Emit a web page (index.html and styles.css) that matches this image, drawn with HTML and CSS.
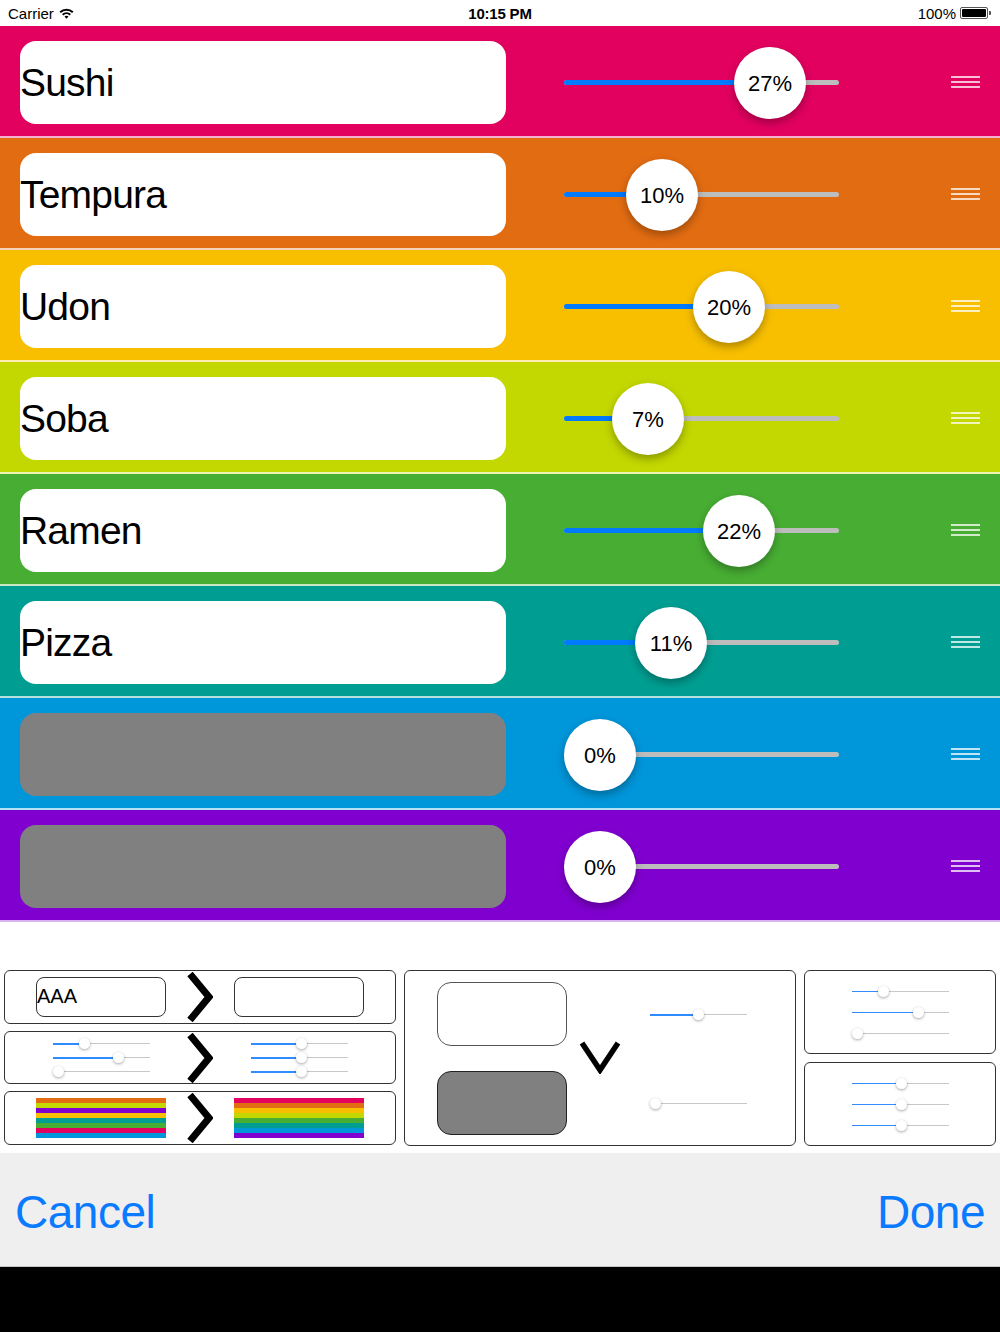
FILE: index.html
```html
<!DOCTYPE html>
<html lang="en">

<head>
    <meta charset="UTF-8">
    <meta name="viewport" content="width=device-width, initial-scale=1.0">
    <title>Pie Editor</title>
    <link rel="stylesheet" href="styles.css">
</head>

<body>
    <div class="statusbar">
        <div class="sb-left">
            Carrier
            <svg class="wifi" width="15" height="11" viewBox="0 0 15 11">
                <path d="M0.5 3.6 A10 10 0 0 1 14.5 3.6 L13.1 5 A8 8 0 0 0 1.9 5 Z" fill="#000"/>
                <path d="M3 6.1 A6.5 6.5 0 0 1 12 6.1 L10.6 7.5 A4.5 4.5 0 0 0 4.4 7.5 Z" fill="#000"/>
                <path d="M5.5 8.6 A3 3 0 0 1 9.5 8.6 L7.5 10.7 Z" fill="#000"/>
            </svg>
        </div>
        <div class="sb-time">10:15 PM</div>
        <div class="sb-right">
            100%
            <span class="battery"><span class="battery-level"></span></span>
        </div>
    </div>

    <!-- 項目リスト -->
    <div class="rows">
        <div class="row c-pink">
            <div class="field">Sushi</div>
            <div class="slider">
                <div class="track"><div class="fill" style="width: 206px"></div></div>
                <div class="thumb" style="left: 170px">27%</div>
            </div>
            <div class="handle"><span></span><span></span><span></span></div>
        </div>
        <div class="row c-orange">
            <div class="field">Tempura</div>
            <div class="slider">
                <div class="track"><div class="fill" style="width: 98px"></div></div>
                <div class="thumb" style="left: 62px">10%</div>
            </div>
            <div class="handle"><span></span><span></span><span></span></div>
        </div>
        <div class="row c-yellow">
            <div class="field">Udon</div>
            <div class="slider">
                <div class="track"><div class="fill" style="width: 165px"></div></div>
                <div class="thumb" style="left: 129px">20%</div>
            </div>
            <div class="handle"><span></span><span></span><span></span></div>
        </div>
        <div class="row c-lime">
            <div class="field">Soba</div>
            <div class="slider">
                <div class="track"><div class="fill" style="width: 84px"></div></div>
                <div class="thumb" style="left: 48px">7%</div>
            </div>
            <div class="handle"><span></span><span></span><span></span></div>
        </div>
        <div class="row c-green">
            <div class="field">Ramen</div>
            <div class="slider">
                <div class="track"><div class="fill" style="width: 175px"></div></div>
                <div class="thumb" style="left: 139px">22%</div>
            </div>
            <div class="handle"><span></span><span></span><span></span></div>
        </div>
        <div class="row c-teal">
            <div class="field">Pizza</div>
            <div class="slider">
                <div class="track"><div class="fill" style="width: 107px"></div></div>
                <div class="thumb" style="left: 71px">11%</div>
            </div>
            <div class="handle"><span></span><span></span><span></span></div>
        </div>
        <div class="row c-blue">
            <div class="field empty"></div>
            <div class="slider">
                <div class="track"></div>
                <div class="thumb" style="left: 0px">0%</div>
            </div>
            <div class="handle"><span></span><span></span><span></span></div>
        </div>
        <div class="row c-purple">
            <div class="field empty"></div>
            <div class="slider">
                <div class="track"></div>
                <div class="thumb" style="left: 0px">0%</div>
            </div>
            <div class="handle"><span></span><span></span><span></span></div>
        </div>
    </div>

    <!-- 操作パネル -->
    <div class="panels">
        <div class="col-left">
            <div class="box trio">
                <div class="mini-field">AAA</div>
                <svg class="chev" width="26" height="50" viewBox="0 0 26 50">
                    <polyline points="3,2 22,25 3,48" fill="none" stroke="#000" stroke-width="7"/>
                </svg>
                <div class="mini-field"></div>
            </div>
            <div class="box trio">
                <div class="mini-group">
                    <div class="mini-slider"><div class="mini-fill" style="width: 32px"></div><div class="mini-thumb" style="left: 26px"></div></div>
                    <div class="mini-slider"><div class="mini-fill" style="width: 66px"></div><div class="mini-thumb" style="left: 60px"></div></div>
                    <div class="mini-slider"><div class="mini-thumb" style="left: 0px"></div></div>
                </div>
                <svg class="chev" width="26" height="50" viewBox="0 0 26 50">
                    <polyline points="3,2 22,25 3,48" fill="none" stroke="#000" stroke-width="7"/>
                </svg>
                <div class="mini-group">
                    <div class="mini-slider"><div class="mini-fill" style="width: 50px"></div><div class="mini-thumb" style="left: 45px"></div></div>
                    <div class="mini-slider"><div class="mini-fill" style="width: 50px"></div><div class="mini-thumb" style="left: 45px"></div></div>
                    <div class="mini-slider"><div class="mini-fill" style="width: 50px"></div><div class="mini-thumb" style="left: 45px"></div></div>
                </div>
            </div>
            <div class="box trio">
                <div class="stripes">
                    <span class="c-orange"></span><span class="c-lime"></span><span class="c-purple"></span><span class="c-yellow"></span>
                    <span class="c-teal"></span><span class="c-green"></span><span class="c-pink"></span><span class="c-blue"></span>
                </div>
                <svg class="chev" width="26" height="50" viewBox="0 0 26 50">
                    <polyline points="3,2 22,25 3,48" fill="none" stroke="#000" stroke-width="7"/>
                </svg>
                <div class="stripes">
                    <span class="c-pink"></span><span class="c-orange"></span><span class="c-yellow"></span><span class="c-lime"></span>
                    <span class="c-green"></span><span class="c-teal"></span><span class="c-blue"></span><span class="c-purple"></span>
                </div>
            </div>
        </div>

        <div class="box compare">
            <div class="cmp-field"></div>
            <svg class="vee" width="42" height="34" viewBox="0 0 42 34">
                <polyline points="3,3 21,30 39,3" fill="none" stroke="#000" stroke-width="5.5"/>
            </svg>
            <div class="cmp-slider">
                <div class="mini-slider"><div class="mini-fill thick" style="width: 48px"></div><div class="mini-thumb" style="left: 43px"></div></div>
            </div>
            <div class="cmp-field grey"></div>
            <div class="cmp-slider">
                <div class="mini-slider"><div class="mini-thumb" style="left: 0px"></div></div>
            </div>
        </div>

        <div class="col-right">
            <div class="box stack">
                <div class="mini-slider"><div class="mini-fill" style="width: 31px"></div><div class="mini-thumb" style="left: 26px"></div></div>
                <div class="mini-slider"><div class="mini-fill" style="width: 66px"></div><div class="mini-thumb" style="left: 61px"></div></div>
                <div class="mini-slider"><div class="mini-thumb" style="left: 0px"></div></div>
            </div>
            <div class="box stack">
                <div class="mini-slider"><div class="mini-fill" style="width: 49px"></div><div class="mini-thumb" style="left: 44px"></div></div>
                <div class="mini-slider"><div class="mini-fill" style="width: 49px"></div><div class="mini-thumb" style="left: 44px"></div></div>
                <div class="mini-slider"><div class="mini-fill" style="width: 49px"></div><div class="mini-thumb" style="left: 44px"></div></div>
            </div>
        </div>
    </div>

    <div class="toolbar">
        <span class="btn">Cancel</span>
        <span class="btn">Done</span>
    </div>
    <div class="blackout"></div>
</body>

</html>
```

FILE: styles.css
```css
body {
    margin: 0;
    width: 1000px;
    background-color: #fff;
    font-family: "Liberation Sans", Arial, sans-serif;
    color: #000;
}

/* ステータスバー */
.statusbar {
    height: 26px;
    display: flex;
    align-items: center;
    justify-content: space-between;
    padding: 0 8px;
    font-size: 15px;
}

.sb-left,
.sb-right {
    width: 200px;
    display: flex;
    align-items: center;
}

.sb-left .wifi {
    margin-left: 5px;
}

.sb-right {
    justify-content: flex-end;
}

.sb-time {
    font-weight: bold;
    font-size: 15px;
    letter-spacing: -0.2px;
}

.battery {
    position: relative;
    margin: 0 4px 0 4px;
    width: 28px;
    height: 12px;
    border: 1px solid #555;
    border-radius: 2px;
    padding: 1px;
    box-sizing: border-box;
    display: flex;
}

.battery::after {
    content: "";
    position: absolute;
    right: -4px;
    top: 3px;
    width: 2px;
    height: 4px;
    background-color: #555;
    border-radius: 0 1px 1px 0;
}

.battery-level {
    flex: 1;
    background-color: #000;
    border-radius: 1px;
}

/* 色 */
.c-pink { background-color: #e2015f; }
.c-orange { background-color: #e26c12; }
.c-yellow { background-color: #f8bf00; }
.c-lime { background-color: #c3d800; }
.c-green { background-color: #47ae33; }
.c-teal { background-color: #009e92; }
.c-blue { background-color: #0096da; }
.c-purple { background-color: #8000d0; }

/* 行 */
.row {
    height: 110px;
    display: flex;
    align-items: center;
    border-bottom: 2px solid rgba(255, 255, 255, 0.7);
}

.field {
    width: 486px;
    height: 83px;
    margin: 3px 0 0 20px;
    background-color: #fff;
    border-radius: 16px;
    font-size: 39px;
    letter-spacing: -0.8px;
    line-height: 83px;
}

.field.empty {
    background-color: #808080;
}

.slider {
    position: relative;
    width: 275px;
    height: 72px;
    margin: 3px 0 0 58px;
    display: flex;
    align-items: center;
}

.track {
    flex: 1;
    height: 5px;
    border-radius: 3px;
    background-color: #bdbdbd;
    overflow: hidden;
}

.fill {
    height: 100%;
    background-color: #007aff;
}

.thumb {
    position: absolute;
    top: 0;
    width: 72px;
    height: 72px;
    border-radius: 50%;
    background-color: #fff;
    box-shadow: 0 4px 9px rgba(0, 0, 0, 0.3);
    font-size: 22px;
    line-height: 74px;
    text-align: center;
}

.handle {
    margin: 2px 20px 0 auto;
    width: 29px;
    display: flex;
    flex-direction: column;
    gap: 3px;
}

.handle span {
    height: 2px;
    background-color: rgba(255, 255, 255, 0.75);
}

/* パネル */
.panels {
    display: grid;
    grid-template-columns: 392px 392px 192px;
    column-gap: 8px;
    height: 176px;
    padding: 48px 4px 0;
}

.box {
    border: 1.5px solid #333;
    border-radius: 6px;
    box-sizing: border-box;
}

.col-left {
    display: grid;
    grid-template-rows: 54px 53px 54px;
    row-gap: 7px;
}

.col-right {
    display: grid;
    grid-template-rows: 84px 84px;
    row-gap: 8px;
}

.trio {
    display: grid;
    grid-template-columns: 130px 26px 130px;
    column-gap: 21px;
    align-items: center;
    padding-left: 31px;
}

.chev {
    display: block;
}

.mini-field {
    height: 40px;
    border: 1.5px solid #333;
    border-radius: 8px;
    box-sizing: border-box;
    font-size: 20px;
    line-height: 37px;
}

.mini-group {
    display: flex;
    flex-direction: column;
    align-items: center;
    gap: 3px;
}

.mini-slider {
    position: relative;
    width: 97px;
    height: 11px;
    background: linear-gradient(#c8c8c8, #c8c8c8) center / 100% 1px no-repeat;
}

.mini-fill {
    position: absolute;
    left: 0;
    top: 5px;
    height: 1.5px;
    background-color: #2f8cff;
}

.mini-fill.thick {
    height: 2px;
}

.mini-thumb {
    position: absolute;
    top: 0;
    width: 11px;
    height: 11px;
    border-radius: 50%;
    background-color: #fff;
    box-shadow: 0 1px 3px rgba(0, 0, 0, 0.35);
}

.stripes {
    height: 40px;
    display: flex;
    flex-direction: column;
}

.stripes span {
    flex: 1;
}

.compare {
    display: grid;
    grid-template-columns: 130px 42px 98px;
    grid-template-rows: 64px 64px;
    column-gap: 12px;
    row-gap: 25px;
    align-items: center;
    padding: 11px 0 0 32px;
}

.compare .cmp-field {
    height: 64px;
    border: 1.5px solid #555;
    border-radius: 14px;
    box-sizing: border-box;
}

.compare .cmp-field.grey {
    grid-column: 1;
    grid-row: 2;
    background-color: #808080;
    border-color: #222;
}

.vee {
    grid-column: 2;
    grid-row: 1 / 3;
    align-self: center;
    margin-top: -4px;
}

.cmp-slider {
    grid-column: 3;
    margin-left: 17px;
}

.stack {
    display: flex;
    flex-direction: column;
    align-items: center;
    justify-content: center;
    gap: 10px;
}

/* ツールバー */
.toolbar {
    margin-top: 7px;
    height: 114px;
    background-color: #efefef;
    border-bottom: 1px solid #c4c4c4;
    display: flex;
    align-items: center;
    justify-content: space-between;
    padding: 4px 15px 0;
    box-sizing: border-box;
}

.btn {
    color: #0a7aff;
    font-size: 46px;
    letter-spacing: -0.5px;
}

.blackout {
    height: 65px;
    background-color: #000;
}
```
